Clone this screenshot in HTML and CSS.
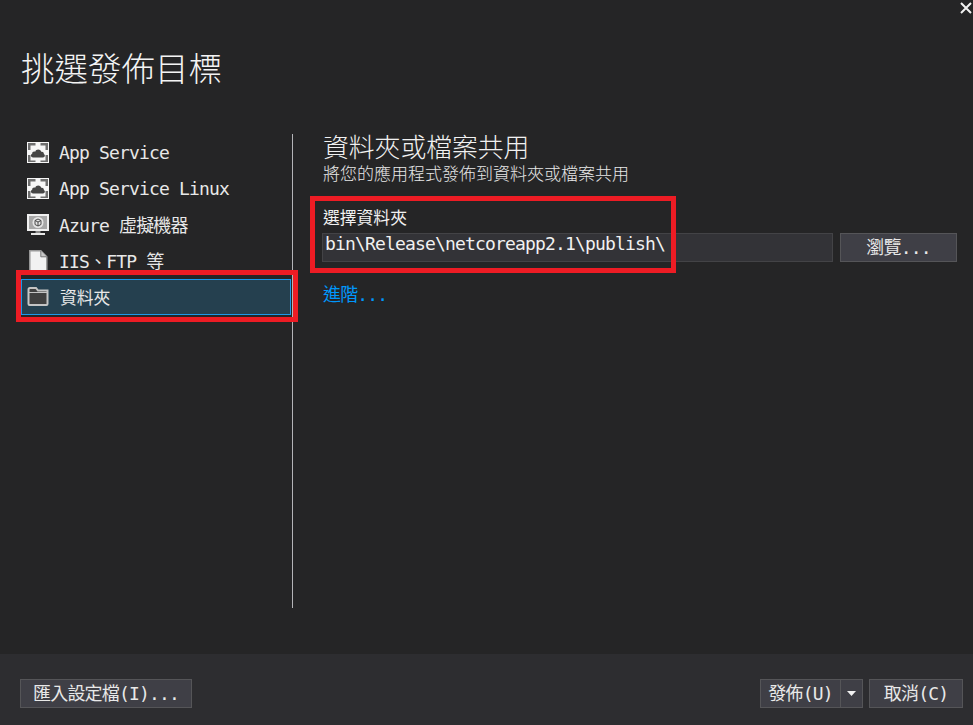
FILE: index.html
```html
<!DOCTYPE html>
<html lang="zh-Hant">
<head>
<meta charset="utf-8">
<title>挑選發佈目標</title>
<link rel="stylesheet" href="styles.css">
</head>
<body>
<div class="dialog">
  <button class="close" aria-label="close"><svg width="12" height="12" viewBox="0 0 12 12"><path d="M1 1L11 11M11 1L1 11" stroke="#f1f1f1" stroke-width="2" fill="none"/></svg></button>
  <header class="header"><h1 class="title">挑選發佈目標</h1></header>
  <div class="content">
    <nav class="sidebar">
      <div class="item">
        <svg class="icon" width="24" height="24" viewBox="0 0 24 24"><rect x="1" y="2" width="22" height="21" fill="#f6f6f6"/><path d="M2 3h7.500v2.500H4.500v4.500H2zM14.500 3H22v7h-2.500V5.500h-5zM2 15h2.500v5.500h5V22H2zM19.500 15H22v7h-7.500v-1.500h5z" fill="#6e6e6e"/><path d="M7 17.500c-2.200 0-2.800-3-.8-3.700-.2-2 1.700-2.700 3-2 .8-3 5.200-3 6 0 1.800-.4 3 1 2.600 2.300 1.800.8 1.200 3.400-.8 3.400z" fill="#454545"/></svg>
        <span class="label">App Service</span>
      </div>
      <div class="item">
        <svg class="icon" width="24" height="24" viewBox="0 0 24 24"><rect x="1" y="2" width="22" height="21" fill="#f6f6f6"/><path d="M2 3h7.500v2.500H4.500v4.500H2zM14.500 3H22v7h-2.500V5.500h-5zM2 15h2.500v5.500h5V22H2zM19.500 15H22v7h-7.500v-1.500h5z" fill="#6e6e6e"/><path d="M7 17.500c-2.200 0-2.800-3-.8-3.700-.2-2 1.700-2.700 3-2 .8-3 5.200-3 6 0 1.800-.4 3 1 2.600 2.300 1.800.8 1.200 3.400-.8 3.400z" fill="#454545"/></svg>
        <span class="label">App Service Linux</span>
      </div>
      <div class="item">
        <svg class="icon" width="24" height="24" viewBox="0 0 24 24"><rect x="1" y="2" width="22" height="17" fill="#f0f0f0"/><rect x="3" y="4" width="18" height="13" fill="#a8a8a8"/><circle cx="12" cy="10.500" r="5.500" fill="#e6e6e6"/><path d="M12 7l3 1.500v4L12 14l-3-1.500v-4zM9 8.500l3 1.500 3-1.500M12 10v4" fill="none" stroke="#4a4a4a" stroke-width="1"/><path d="M9.500 19h5v2h-5z" fill="#8c8c8c"/><path d="M5 21h14v2H5z" fill="#e8e8e8"/></svg>
        <span class="label">Azure 虛擬機器</span>
      </div>
      <div class="item">
        <svg class="icon" width="24" height="24" viewBox="0 0 24 24"><path d="M3.800 2.800h11l6 6V25H3.800z" fill="#f2f2f2" stroke="#9a9a9a" stroke-width="1.500"/><path d="M14.800 2.800v6h6" fill="#c8c8c8" stroke="#777"/></svg>
        <span class="label">IIS、FTP 等</span>
      </div>
      <div class="item item-selected">
        <svg class="icon" width="24" height="24" viewBox="0 0 24 24"><path d="M2.500 19V4.500a1.500 1.500 0 0 1 1.500-1.500h6l2 2.500h9.500V19a1 1 0 0 1-1 1H3.500a1 1 0 0 1-1-1z" fill="#404040" stroke="#c4c4c4" stroke-width="2"/><path d="M3 7.500h18" stroke="#c4c4c4" stroke-width="1"/></svg>
        <span class="label label-cjk">資料夾</span>
      </div>
    </nav>
    <main class="main">
      <h2 class="heading">資料夾或檔案共用</h2>
      <p class="sub">將您的應用程式發佈到資料夾或檔案共用</p>
      <label class="field-label">選擇資料夾</label>
      <div class="field-row">
        <div class="input">bin\Release\netcoreapp2.1\publish\</div>
        <button class="btn browse">瀏覽...</button>
      </div>
      <a class="link">進階...</a>
    </main>
  </div>
  <footer class="footer">
    <button class="btn import">匯入設定檔(I)...</button>
    <div class="actions">
      <div class="split">
        <button class="btn split-main">發佈(U)</button>
        <button class="btn split-arrow" aria-label="more"><svg width="9" height="5" viewBox="0 0 9 5"><path d="M0 0h9L4.500 5z" fill="#f1f1f1"/></svg></button>
      </div>
      <button class="btn cancel">取消(C)</button>
    </div>
  </footer>
  <div class="mark mark-left"></div>
  <div class="mark mark-right"></div>
</div>
</body>
</html>
```
FILE: styles.css
```css
* { box-sizing: border-box; }
html, body { margin: 0; padding: 0; }
body {
  width: 973px;
  height: 725px;
  overflow: hidden;
  background: #252526;
  color: #f1f1f1;
  font-family: "DejaVu Sans Mono", "Noto Sans CJK TC", monospace;
  font-size: 18px;
  letter-spacing: -0.84px;
}
.dialog {
  position: relative;
  width: 973px;
  height: 725px;
  display: flex;
  flex-direction: column;
}
.close {
  position: absolute;
  top: 2px;
  right: 1px;
  padding: 0;
  border: 0;
  background: none;
  display: flex;
}
.header {
  height: 134px;
  padding: 43px 0 0 21px;
  flex: none;
}
.title {
  margin: 0;
  font-family: "Noto Sans CJK TC", sans-serif;
  font-size: 33.500px;
  font-weight: 300;
  letter-spacing: 0;
  line-height: 48px;
  color: #f4f4f4;
}
.content {
  height: 474px;
  flex: none;
  display: flex;
}
.sidebar {
  width: 293px;
  padding-left: 21px;
  padding-right: 1px;
  border-right: 1px solid #b4b4b8;
  display: flex;
  flex-direction: column;
}
.item {
  height: 36px;
  display: flex;
  align-items: center;
  gap: 9px;
  padding-left: 5px;
  white-space: pre;
  color: #e8e8e8;
}
.icon { flex: none; }
.item-selected {
  background: #25404f;
  border: 1px solid #1c97ea;
  margin-top: 1px;
  padding-left: 4px;
  gap: 10px;
}
.label-cjk {
  font-family: "Noto Sans CJK TC", sans-serif;
  font-size: 16.800px;
  letter-spacing: 0;
}
.main {
  flex: 1;
  padding: 0 16px 0 30px;
  display: flex;
  flex-direction: column;
  align-items: flex-start;
}
.heading {
  margin: 0;
  font-family: "Noto Sans CJK TC", sans-serif;
  font-size: 25.800px;
  font-weight: 300;
  letter-spacing: 0;
  line-height: 24px;
  color: #f1f1f1;
}
.sub {
  margin: 3px 0 0;
  font-family: "Noto Sans CJK TC", sans-serif;
  font-size: 17px;
  font-weight: 300;
  letter-spacing: 0;
  line-height: 24px;
  color: #e8e8e8;
}
.field-label {
  margin: 18px 0 2px;
  font-family: "Noto Sans CJK TC", sans-serif;
  font-size: 16.800px;
  letter-spacing: 0;
  line-height: 28px;
  color: #f1f1f1;
}
.field-row {
  display: flex;
  margin-left: -1px;
  gap: 7px;
  align-self: stretch;
}
.input {
  width: 511px;
  height: 29px;
  background: #333337;
  border: 1px solid #434346;
  padding-left: 2px;
  line-height: 19px;
  color: #f1f1f1;
}
.btn {
  height: 29px;
  padding: 0 0 3px;
  background: #3f3f46;
  border: 1px solid #555558;
  color: #e8e8e8;
  font: inherit;
  letter-spacing: inherit;
  display: flex;
  align-items: center;
  justify-content: center;
}
.browse { width: 117px; }
.link {
  margin-top: 19px;
  line-height: 28px;
  color: #0097fb;
}
.footer {
  flex: none;
  margin-top: 46px;
  height: 71px;
  background: #2d2d30;
  padding: 25px 10px 0 20px;
  display: flex;
  justify-content: space-between;
  align-items: flex-start;
}
.import { width: 172px; }
.actions { display: flex; gap: 6px; }
.split { display: flex; }
.split-main { width: 81px; }
.split-arrow { width: 22px; border-left: 0; padding: 0; }
.cancel { width: 94px; }
.mark {
  position: absolute;
  border: 5px solid #ed1c24;
  pointer-events: none;
}
.mark-left { left: 16px; top: 270px; width: 282px; height: 52px; }
.mark-right { left: 310px; top: 196px; width: 366px; height: 77px; }
```
